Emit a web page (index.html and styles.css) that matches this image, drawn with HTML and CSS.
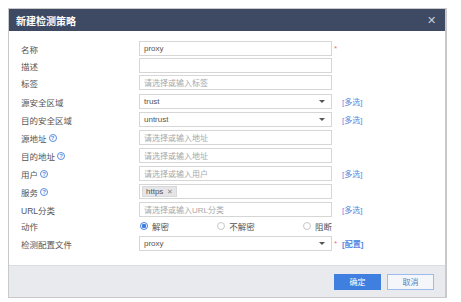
FILE: index.html
```html
<!DOCTYPE html>
<html lang="zh-CN">
<head>
    <meta charset="UTF-8">
    <title>新建检测策略</title>
    <link rel="stylesheet" href="styles.css">
</head>
<body>
    <div class="dialog">
        <div class="dialog-header">
            <span class="dialog-title">新建检测策略</span>
            <span class="dialog-close">&#x2715;</span>
        </div>

        <div class="dialog-body">
            <div class="form-row tight">
                <label class="form-label">名称</label>
                <div class="field"><span class="value">proxy</span></div>
                <span class="required">*</span>
                <span></span>
            </div>
            <div class="form-row tight">
                <label class="form-label">描述</label>
                <div class="field"></div>
                <span></span>
                <span></span>
            </div>
            <div class="form-row loose">
                <label class="form-label">标签</label>
                <div class="field"><span class="placeholder">请选择或输入标签</span></div>
                <span></span>
                <span></span>
            </div>
            <div class="form-row">
                <label class="form-label">源安全区域</label>
                <div class="field select"><span class="value">trust</span><span class="caret"></span></div>
                <span></span>
                <a class="link">[多选]</a>
            </div>
            <div class="form-row">
                <label class="form-label">目的安全区域</label>
                <div class="field select"><span class="value">untrust</span><span class="caret"></span></div>
                <span></span>
                <a class="link">[多选]</a>
            </div>
            <div class="form-row">
                <label class="form-label">源地址<span class="help">?</span></label>
                <div class="field"><span class="placeholder">请选择或输入地址</span></div>
                <span></span>
                <span></span>
            </div>
            <div class="form-row">
                <label class="form-label">目的地址<span class="help">?</span></label>
                <div class="field"><span class="placeholder">请选择或输入地址</span></div>
                <span></span>
                <span></span>
            </div>
            <div class="form-row">
                <label class="form-label">用户<span class="help">?</span></label>
                <div class="field"><span class="placeholder">请选择或输入用户</span></div>
                <span></span>
                <a class="link">[多选]</a>
            </div>
            <div class="form-row">
                <label class="form-label">服务<span class="help">?</span></label>
                <div class="field"><span class="tag">https <span class="tag-x">&#x2715;</span></span></div>
                <span></span>
                <span></span>
            </div>
            <div class="form-row">
                <label class="form-label">URL分类</label>
                <div class="field"><span class="placeholder">请选择或输入URL分类</span></div>
                <span></span>
                <a class="link">[多选]</a>
            </div>
            <div class="form-row radio-row">
                <label class="form-label">动作</label>
                <div class="radios">
                    <span class="radio checked"><span class="dot"></span>解密</span>
                    <span class="radio"><span class="dot"></span>不解密</span>
                    <span class="radio"><span class="dot"></span>阻断</span>
                </div>
                <span></span>
                <span></span>
            </div>
            <div class="form-row">
                <label class="form-label">检测配置文件</label>
                <div class="field select"><span class="value">proxy</span><span class="caret"></span></div>
                <span class="required">*</span>
                <a class="link strong">[配置]</a>
            </div>
        </div>

        <div class="dialog-footer">
            <button class="btn btn-primary">确定</button>
            <button class="btn btn-default">取消</button>
        </div>
    </div>
</body>
</html>
```

FILE: styles.css
```css
* {
    margin: 0;
    padding: 0;
    box-sizing: border-box;
}

body {
    font-family: "Liberation Sans", "Noto Sans CJK SC", sans-serif;
    background-color: #fff;
    color: #555;
    font-size: 8.5px;
}

.dialog {
    width: 439px;
    height: 290px;
    margin: 8px 0 0 8px;
    border: 1px solid #c9c9c9;
    border-right-width: 2px;
    display: flex;
    flex-direction: column;
}

.dialog-header {
    height: 22px;
    background-color: #3e4a64;
    display: flex;
    align-items: center;
    justify-content: space-between;
    padding: 0 9px 0 7px;
}

.dialog-title {
    color: #fff;
    font-size: 10px;
    font-weight: bold;
}

.dialog-close {
    color: #c8ccd6;
    font-size: 11px;
    line-height: 1;
}

.dialog-body {
    flex: 1;
    padding: 10px 0 0 12px;
}

.form-row {
    display: grid;
    grid-template-columns: 118px 193px 10px auto;
    align-items: center;
    height: 15px;
    margin-bottom: 3px;
}

.form-row.tight {
    margin-bottom: 2px;
}

.form-row.loose {
    margin-bottom: 4px;
}

.form-row.radio-row {
    height: 12px;
    margin-bottom: 4px;
}

.form-label {
    display: flex;
    align-items: center;
    color: #555;
}

.help {
    display: inline-flex;
    align-items: center;
    justify-content: center;
    width: 8px;
    height: 8px;
    margin-left: 2px;
    border: 1px solid #5b8be0;
    border-radius: 50%;
    color: #5b8be0;
    font-size: 6px;
    font-weight: bold;
    line-height: 1;
}

.field {
    height: 15px;
    border: 1px solid #d6d6d6;
    background-color: #fff;
    display: flex;
    align-items: center;
    padding: 0 4px;
}

.field.select {
    justify-content: space-between;
}

.value {
    color: #555;
    font-size: 8px;
}

.placeholder {
    color: #a8a8a8;
    font-size: 8px;
}

.caret {
    width: 0;
    height: 0;
    margin-right: 2px;
    border-left: 3px solid transparent;
    border-right: 3px solid transparent;
    border-top: 3px solid #555;
}

.tag {
    display: inline-flex;
    align-items: center;
    height: 11px;
    padding: 0 3px;
    margin-left: -2px;
    background-color: #e6e6e9;
    border: 1px solid #d8d8dc;
    color: #555;
    font-size: 8px;
}

.tag-x {
    margin-left: 4px;
    color: #888;
    font-size: 7px;
}

.required {
    color: #f07070;
    font-size: 8px;
    padding-left: 2px;
}

.link {
    color: #5a88e2;
    font-size: 8px;
}

.link.strong {
    font-weight: bold;
}

.radios {
    display: flex;
    justify-content: space-between;
    padding-left: 1px;
}

.radio {
    display: flex;
    align-items: center;
    color: #555;
}

.radio .dot {
    width: 8px;
    height: 8px;
    margin-right: 4px;
    border: 1px solid #c8c8c8;
    border-radius: 50%;
    background-color: #fff;
}

.radio.checked .dot {
    border-color: #3f7fe0;
    background: radial-gradient(circle, #3f7fe0 0 2px, #fff 2.5px);
}

.dialog-footer {
    height: 32px;
    background-color: #e9eaee;
    border-top: 1px solid #dcdde2;
    display: flex;
    justify-content: flex-end;
    align-items: center;
    gap: 6px;
    padding-right: 11px;
}

.btn {
    width: 47px;
    height: 16px;
    font-family: inherit;
    font-size: 8px;
    cursor: pointer;
}

.btn-primary {
    background-color: #3f7fe0;
    border: 1px solid #3f7fe0;
    color: #fff;
}

.btn-default {
    background-color: #f4f6fa;
    border: 1px solid #9dbbec;
    color: #5a7fc0;
}
```
